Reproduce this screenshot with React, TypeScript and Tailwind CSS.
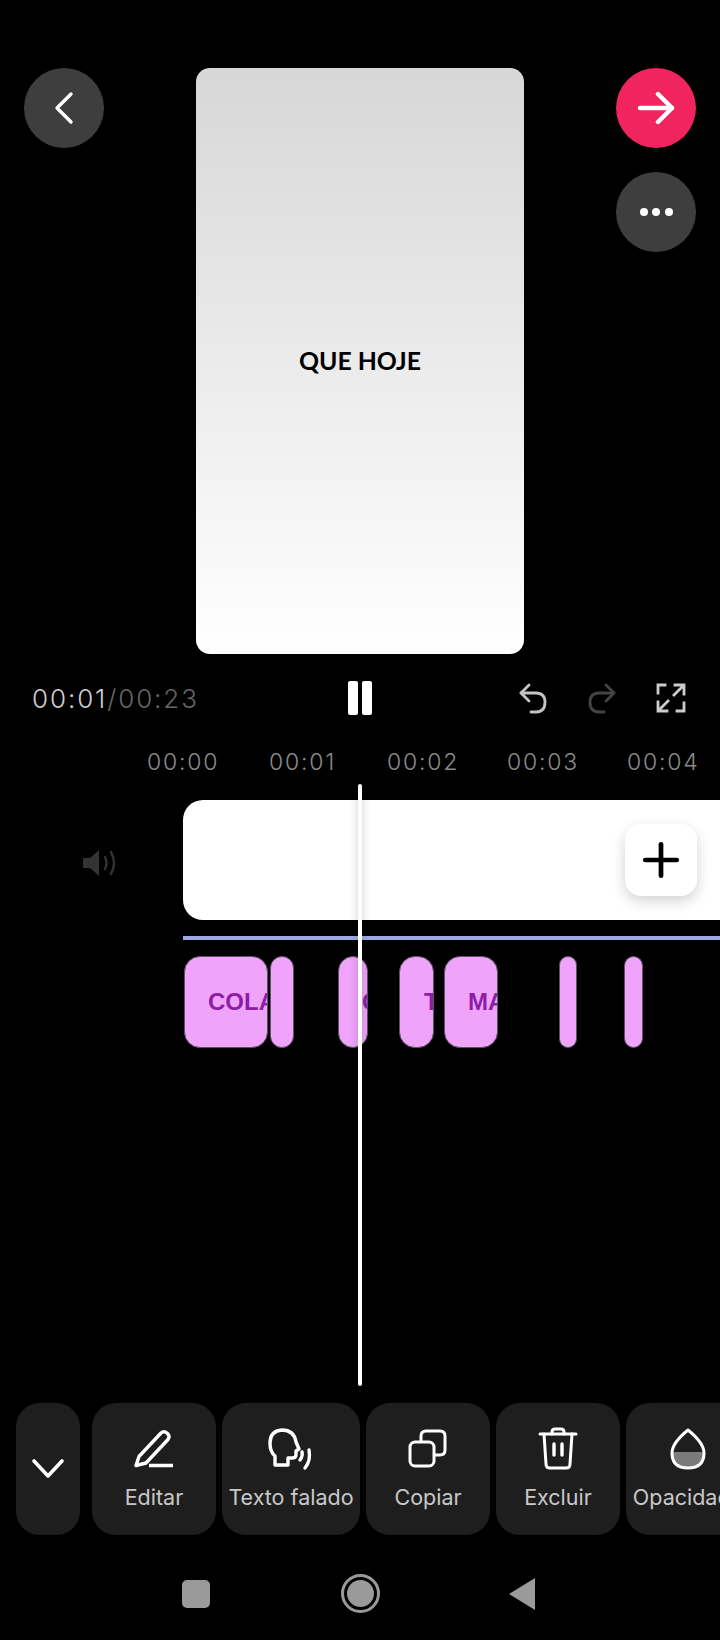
import React from 'react';
import { Plus } from 'lucide-react';

const rulerLabels = [
  { label: '00:00', className: 'w-[122px]' },
  { label: '00:01', className: 'w-[118px]' },
  { label: '00:02', className: 'w-[120px]' },
  { label: '00:03', className: 'w-[120px]' },
  { label: '00:04', className: 'w-[120px]' },
];

// text clips on the caption track, gaps are time between them
const clips = [
  { label: 'COLA', className: 'w-[84px] pl-[23px]' },
  { label: '', className: 'w-[24px] ml-[2px]' },
  { label: 'C', className: 'w-[30px] ml-[44px] pl-[23px]' },
  { label: 'T', className: 'w-[35px] ml-[31px] pl-[24px]' },
  { label: 'MA', className: 'w-[54px] ml-[10px] pl-[23px]' },
  { label: '', className: 'w-[18px] ml-[61px]' },
  { label: '', className: 'w-[19px] ml-[47px]' },
];

const PenIcon = () => (
  <svg width="44" height="44" viewBox="0 0 44 44" fill="none" stroke="white" strokeWidth="3.4" strokeLinejoin="round" strokeLinecap="round">
    <path d="M4 38.5 L7 29.5 L29 6 Q32 3.5 35.5 6.5 Q38.5 9.5 36 12.5 L14 36 Z" />
    <path d="M17 38.5 H41" strokeWidth="3.6" strokeLinecap="butt" />
  </svg>
);

const VoiceIcon = () => (
  <svg width="48" height="44" viewBox="0 0 48 44" fill="none" stroke="white" strokeWidth="3.4" strokeLinejoin="round" strokeLinecap="round">
    <path d="M8 38 V29 Q3 25 3 16 Q3 4 15 3 Q27 3 29 15 L32 22 L29 24 V28 Q29 31 25 31 H21 V38 Z" />
    <path d="M33 33 Q36 29 35 25" />
    <path d="M38 41 Q44 34 42 23" />
  </svg>
);

const CopyIcon = () => (
  <svg width="40" height="40" viewBox="0 0 40 40" fill="none" stroke="white" strokeWidth="3" strokeLinejoin="round">
    <rect x="2" y="13" width="24" height="24" rx="5" />
    <path d="M13 13 V7 Q13 2 18 2 H32 Q37 2 37 7 V21 Q37 26 32 26 H26" />
  </svg>
);

const TrashIcon = () => (
  <svg width="40" height="44" viewBox="0 0 40 44" fill="none" stroke="white" strokeWidth="3" strokeLinejoin="round" strokeLinecap="round">
    <path d="M2 7 H38" />
    <path d="M14 7 V5 Q14 2 17 2 H23 Q26 2 26 5 V7" />
    <path d="M6 7 L8 37 Q8 41 12 41 H28 Q32 41 32 37 L34 7" />
    <path d="M16 17 V28 M24 17 V28" strokeWidth="3.4" />
  </svg>
);

const DropIcon = () => (
  <svg width="36" height="44" viewBox="0 0 36 44" fill="none">
    <path d="M2.5 25 H33.5 Q33.5 41 18 41 Q2.5 41 2.5 25 Z" fill="#7a7a7a" />
    <path d="M18 3 Q34 16 34 26 Q34 41 18 41 Q2 41 2 26 Q2 16 18 3 Z" stroke="white" strokeWidth="3" strokeLinejoin="round" />
  </svg>
);

const tools = [
  { label: 'Editar', icon: <PenIcon />, className: 'w-[124px] ml-[12px]' },
  { label: 'Texto falado', icon: <VoiceIcon />, className: 'w-[138px] ml-[6px]' },
  { label: 'Copiar', icon: <CopyIcon />, className: 'w-[124px] ml-[6px]' },
  { label: 'Excluir', icon: <TrashIcon />, className: 'w-[124px] ml-[6px]' },
  { label: 'Opacidade', icon: <DropIcon />, className: 'w-[124px] ml-[6px]' },
];

export default function App() {
  return (
    <div className="relative h-[1640px] w-[720px] overflow-hidden bg-black font-['Inter',sans-serif] text-white">
      {/* Preview */}
      <div className="flex items-start justify-between px-[24px] pt-[68px]">
        <button className="flex h-[80px] w-[80px] items-center justify-center rounded-full bg-[#3e3e3e]">
          <svg width="24" height="34" viewBox="0 0 24 34" fill="none" stroke="white" strokeWidth="3.4" strokeLinecap="round" strokeLinejoin="round">
            <path d="M19 3 L5 17 L19 31" />
          </svg>
        </button>
        <div className="flex h-[586px] w-[328px] items-center justify-center rounded-[14px] bg-gradient-to-b from-[#d7d7d7] to-white">
          <span className="font-['Lato',sans-serif] text-[24.8px] font-bold text-black">QUE HOJE</span>
        </div>
        <div className="flex flex-col gap-[24px]">
          <button className="flex h-[80px] w-[80px] items-center justify-center rounded-full bg-[#f0245e]">
            <svg width="40" height="34" viewBox="0 0 40 34" fill="none" stroke="white" strokeWidth="4.4" strokeLinecap="round" strokeLinejoin="round">
              <path d="M4 17 H36" />
              <path d="M22 3 L36 17 L22 31" />
            </svg>
          </button>
          <button className="flex h-[80px] w-[80px] items-center justify-center gap-[4.5px] rounded-full bg-[#3e3e3e]">
            <span className="h-[8px] w-[8px] rounded-full bg-white" />
            <span className="h-[8px] w-[8px] rounded-full bg-white" />
            <span className="h-[8px] w-[8px] rounded-full bg-white" />
          </button>
        </div>
      </div>

      {/* Transport */}
      <div className="mt-[27px] flex h-[34px] items-center pl-[32px]">
        <div className="w-[316px] text-[26px] font-light tracking-[1.9px] text-[#d0d0d0]">
          00:01<span className="text-[#666666]">/00:23</span>
        </div>
        <div className="flex gap-[4px]">
          <span className="h-[34px] w-[10px] rounded-[2px] bg-white" />
          <span className="h-[34px] w-[10px] rounded-[2px] bg-white" />
        </div>
        <div className="ml-[146px] flex items-center gap-[39px]">
          <svg width="30" height="32" viewBox="0 0 30 32" fill="none" stroke="#c4c4c4" strokeWidth="2.8" strokeLinecap="round" strokeLinejoin="round">
            <path d="M11 3 L3 11 L11 19" />
            <path d="M3 11 H18 Q27 11 27 20 Q27 30 18 30 H13" />
          </svg>
          <svg width="30" height="32" viewBox="0 0 30 32" fill="none" stroke="#444444" strokeWidth="2.8" strokeLinecap="round" strokeLinejoin="round">
            <path d="M19 3 L27 11 L19 19" />
            <path d="M27 11 H12 Q3 11 3 20 Q3 30 12 30 H17" />
          </svg>
          <svg width="30" height="30" viewBox="0 0 30 30" fill="none" stroke="#cccccc" strokeWidth="2.8" strokeLinecap="square">
            <path d="M2 10 V2 H9" />
            <path d="M28 20 V28 H21" />
            <path d="M18 12 L27 3 M19 2 H28 V11" />
            <path d="M12 18 L3 27 M11 28 H2 V19" />
          </svg>
        </div>
      </div>

      {/* Ruler */}
      <div className="mt-[31px] flex h-[32px] items-center pl-[147px] text-[23px] font-light tracking-[1.8px] text-[#8a8a8a]">
        {rulerLabels.map((item) => (
          <span key={item.label} className={`shrink-0 ${item.className}`}>{item.label}</span>
        ))}
      </div>

      {/* Timeline */}
      <div className="mt-[22px] flex items-start">
        <div className="flex h-[126px] w-[183px] shrink-0 items-center justify-center pl-[16px]">
          <svg width="38" height="32" viewBox="0 0 38 32" fill="none">
            <path d="M2 11 H9 L18 3 V29 L9 21 H2 Z" fill="#333333" />
            <path d="M24 10 Q27 16 24 22" stroke="#333333" strokeWidth="2.4" strokeLinecap="round" />
            <path d="M30 5 Q36 16 30 27" stroke="#333333" strokeWidth="2.4" strokeLinecap="round" />
          </svg>
        </div>
        <div className="relative flex-1">
          <div className="relative flex h-[120px] w-[600px] items-center rounded-l-[20px] bg-white pl-[442px]">
            <button className="flex h-[72px] w-[72px] items-center justify-center rounded-[16px] bg-white shadow-[0_5px_14px_rgba(0,0,0,0.18)]">
              <Plus size={54} strokeWidth={2.1} color="black" />
            </button>
          </div>
          <div className="mt-[16px] h-[4px] bg-[#a0a8e4]" />
          <div className="mt-[16px] flex h-[92px] pl-[1px]">
            {clips.map((clip, i) => (
              <div
                key={i}
                className={`flex shrink-0 items-center overflow-hidden rounded-[16px] border border-[#5f5064] bg-[#f0a3fb] text-[24px] font-bold whitespace-nowrap text-[#8a1ea6] font-['Liberation_Sans',sans-serif] ${clip.className}`}
              >
                {clip.label}
              </div>
            ))}
          </div>
        </div>
      </div>

      {/* Playhead */}
      <div className="absolute top-[784px] left-[358px] h-[602px] w-[4px] rounded-full bg-white shadow-[0_0_8px_rgba(0,0,0,0.25)]" />

      {/* Toolbar */}
      <div className="mt-[355px] flex pl-[16px]">
        <button className="flex h-[132px] w-[64px] shrink-0 items-center justify-center rounded-[24px] bg-[#1e1e1e]">
          <svg width="34" height="22" viewBox="0 0 34 22" fill="none" stroke="white" strokeWidth="3.6" strokeLinecap="round" strokeLinejoin="round">
            <path d="M3 3 L17 18 L31 3" />
          </svg>
        </button>
        {tools.map((tool) => (
          <div key={tool.label} className={`flex h-[132px] shrink-0 flex-col items-center overflow-hidden rounded-[24px] bg-[#1e1e1e] pt-[24px] ${tool.className}`}>
            <div className="flex h-[44px] items-center justify-center">{tool.icon}</div>
            <span className="mt-[10px] text-[21.5px] whitespace-nowrap text-[#c8c8c8]">{tool.label}</span>
          </div>
        ))}
      </div>

      {/* Android nav */}
      <div className="mt-[39px] flex items-center pl-[182px]">
        <div className="h-[28px] w-[28px] rounded-[5px] bg-[#9a9a9a]" />
        <div className="ml-[131px] flex h-[39px] w-[39px] items-center justify-center rounded-full border-[3px] border-[#9a9a9a]">
          <div className="h-[27px] w-[27px] rounded-full bg-[#9a9a9a]" />
        </div>
        <svg className="ml-[128px]" width="28" height="34" viewBox="0 0 28 34">
          <path d="M27 1 V33 L1 17 Z" fill="#9a9a9a" />
        </svg>
      </div>
    </div>
  );
}
